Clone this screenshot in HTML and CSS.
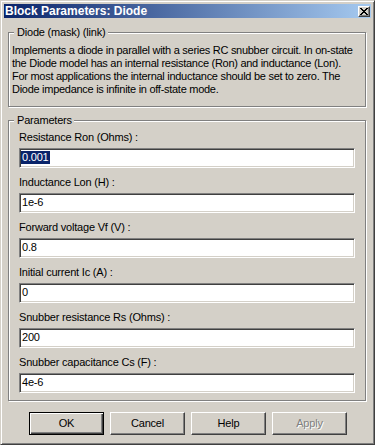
FILE: index.html
```html
<!DOCTYPE html>
<html lang="en">
<head>
<meta charset="utf-8">
<title>Block Parameters: Diode</title>
<link rel="stylesheet" href="styles.css">
</head>
<body>
<div class="window">
  <div class="titlebar">
    <span class="title">Block Parameters: Diode</span>
    <span class="close" aria-label="Close">
      <svg class="close-glyph" width="8" height="7" viewBox="0 0 8 7" shape-rendering="crispEdges"><path fill="#000" d="M0 0h2v1h-2z M6 0h2v1h-2z M1 1h2v1h-2z M5 1h2v1h-2z M2 2h4v1h-4z M3 3h2v1h-2z M2 4h4v1h-4z M1 5h2v1h-2z M5 5h2v1h-2z M0 6h2v1h-2z M6 6h2v1h-2z"/></svg>
    </span>
  </div>

  <div class="group desc">
    <span class="group-label">Diode (mask) (link)</span>
    <p class="desc-text">Implements a diode in parallel with a series RC snubber circuit. In on-state<br>the Diode model has an internal resistance (Ron) and inductance (Lon).<br>For most applications the internal inductance should be set to zero. The<br>Diode impedance is infinite in off-state mode.</p>
  </div>

  <div class="group params">
    <span class="group-label">Parameters</span>
    <div class="param">
      <div class="param-label">Resistance Ron (Ohms) :</div>
      <div class="field"><span class="sel">0.001</span></div>
    </div>
    <div class="param">
      <div class="param-label">Inductance Lon (H) :</div>
      <div class="field">1e-6</div>
    </div>
    <div class="param">
      <div class="param-label">Forward voltage Vf (V) :</div>
      <div class="field">0.8</div>
    </div>
    <div class="param">
      <div class="param-label">Initial current Ic (A) :</div>
      <div class="field">0</div>
    </div>
    <div class="param">
      <div class="param-label">Snubber resistance Rs (Ohms) :</div>
      <div class="field">200</div>
    </div>
    <div class="param">
      <div class="param-label">Snubber capacitance Cs (F) :</div>
      <div class="field">4e-6</div>
    </div>
  </div>

  <div class="buttons">
    <button class="btn default" type="button">OK</button>
    <button class="btn" type="button">Cancel</button>
    <button class="btn" type="button">Help</button>
    <button class="btn" type="button" disabled>Apply</button>
  </div>
</div>
</body>
</html>
```

FILE: styles.css
```css
* {
  box-sizing: border-box;
}

html,
body {
  margin: 0;
  padding: 0;
}

body {
  width: 375px;
  height: 445px;
  background: #d4d0c8;
  font-family: "Liberation Sans", Arial, sans-serif;
  font-size: 11px;
  line-height: 13px;
  letter-spacing: -0.2px;
  color: #000;
}

.window {
  width: 375px;
  height: 445px;
  border: 1px solid;
  border-color: #d4d0c8 #404040 #404040 #d4d0c8;
  box-shadow: inset 1px 1px 0 #fff, inset -1px -1px 0 #808080;
  padding: 3px;
  display: flex;
  flex-direction: column;
  background: #d4d0c8;
}

.titlebar {
  flex: none;
  height: 14px;
  background: linear-gradient(to right, #0a246a, #a6caf0);
  display: flex;
  align-items: center;
  justify-content: space-between;
  padding: 0 1px 0 1px;
}

.title {
  color: #fff;
  font-weight: bold;
  font-size: 12px;
  letter-spacing: 0;
  line-height: 14px;
}

.close {
  width: 12px;
  height: 11px;
  background: #d4d0c8;
  border: 1px solid;
  border-color: #fff #404040 #404040 #fff;
  box-shadow: inset -1px -1px 0 #808080, inset 1px 1px 0 #d4d0c8;
}

.close-glyph {
  display: block;
  margin: 1px 0 0 1px;
}

.group {
  position: relative;
  flex: none;
  border: 1px solid #808080;
  box-shadow: 1px 1px 0 #fff, inset 1px 1px 0 #fff;
  margin: 0 5px 0 4px;
}

.group-label {
  position: absolute;
  top: -7px;
  left: 5px;
  padding: 0 2px 0 3px;
  background: #d4d0c8;
  line-height: 13px;
  white-space: nowrap;
}

.desc {
  margin-top: 14px;
  padding: 11px 0 10px 3px;
}

.desc-text {
  margin: 0;
  white-space: nowrap;
  letter-spacing: -0.28px;
}

.params {
  margin-top: 13px;
  padding: 10px 10px 7px;
}

.param + .param {
  margin-top: 8px;
}

.param-label {
  height: 13px;
  margin-bottom: 4px;
  white-space: nowrap;
}

.field {
  height: 20px;
  border: 1px solid;
  border-color: #808080 #fff #fff #808080;
  box-shadow: inset 1px 1px 0 #404040, inset -1px -1px 0 #d4d0c8;
  background: #fff;
  padding: 2px 2px 0;
  line-height: 13px;
  white-space: nowrap;
}

.sel {
  display: inline-block;
  height: 13px;
  margin-left: -1px;
  padding: 0 1px;
  background: #0a246a;
  color: #fff;
}

.buttons {
  flex: none;
  display: flex;
  gap: 6px;
  margin-top: 11px;
  padding-left: 25px;
}

.btn {
  width: 75px;
  height: 23px;
  margin: 0;
  padding: 0;
  border: 1px solid;
  border-color: #fff #404040 #404040 #fff;
  box-shadow: inset -1px -1px 0 #808080, inset 1px 1px 0 #d4d0c8;
  background: #d4d0c8;
  color: #000;
  font-family: inherit;
  font-size: 11px;
  letter-spacing: -0.2px;
  line-height: 13px;
  text-align: center;
}

.btn.default {
  border-color: #000;
  box-shadow: inset 1px 1px 0 #fff, inset -1px -1px 0 #404040, inset -2px -2px 0 #808080;
}

.btn:disabled {
  color: #808080;
  text-shadow: 1px 1px 0 #fff;
}
```
